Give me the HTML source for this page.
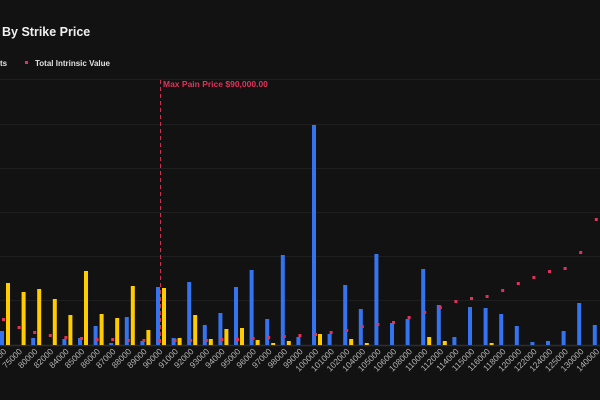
<!DOCTYPE html>
<html><head><meta charset="utf-8"><style>
html,body{margin:0;padding:0;background:#121212;width:600px;height:400px;overflow:hidden}
svg{display:block}
text{font-family:"Liberation Sans",sans-serif}
.b{fill:#3574f0}.y{fill:#ffcc00}.d{fill:#e0325a}
.l{fill:#b4b4b4;font-size:8.5px}
</style></head><body>
<svg width="600" height="400" viewBox="0 0 600 400">
<rect width="600" height="400" fill="#121212"/>
<text x="2" y="36" fill="#f0f0f0" font-size="12.5" font-weight="bold">By Strike Price</text>
<text x="0" y="66" fill="#e0e0e0" font-size="8" font-weight="bold">ts</text>
<rect x="25" y="61" width="3" height="3" class="d"/>
<text x="35" y="66" fill="#e0e0e0" font-size="8" font-weight="bold">Total Intrinsic Value</text>
<g stroke="#1f1f1f" stroke-width="1">
<line x1="0" y1="79.5" x2="600" y2="79.5"/><line x1="0" y1="124.5" x2="600" y2="124.5"/>
<line x1="0" y1="168.5" x2="600" y2="168.5"/><line x1="0" y1="212.5" x2="600" y2="212.5"/>
<line x1="0" y1="256.5" x2="600" y2="256.5"/><line x1="0" y1="300.5" x2="600" y2="300.5"/>
</g>
<line x1="0" y1="345.5" x2="600" y2="345.5" stroke="#2e2e2e" stroke-width="1.5"/>
<line x1="160.5" y1="80" x2="160.5" y2="345" stroke="#d0304f" stroke-width="1" stroke-dasharray="4,3"/>
<text x="163" y="87" fill="#e0325a" font-size="8.5" font-weight="bold">Max Pain Price $90,000.00</text>
<g>
<g transform="translate(5,0)"><rect x="-5" y="331" width="4" height="14" class="b"/><rect x="1" y="283" width="4" height="62" class="y"/><rect x="-3" y="318" width="3" height="3" class="d"/></g>
<g transform="translate(20.6,0)"><rect x="1" y="292" width="4" height="53" class="y"/><rect x="-3" y="326" width="3" height="3" class="d"/></g>
<g transform="translate(36.2,0)"><rect x="-5" y="338" width="4" height="7" class="b"/><rect x="1" y="289" width="4" height="56" class="y"/><rect x="-3" y="331" width="3" height="3" class="d"/></g>
<g transform="translate(51.8,0)"><rect x="1" y="299" width="4" height="46" class="y"/><rect x="-3" y="334" width="3" height="3" class="d"/></g>
<g transform="translate(67.4,0)"><rect x="-5" y="339" width="4" height="6" class="b"/><rect x="1" y="315" width="4" height="30" class="y"/><rect x="-3" y="336" width="3" height="3" class="d"/></g>
<g transform="translate(83,0)"><rect x="-5" y="338" width="4" height="7" class="b"/><rect x="1" y="271" width="4" height="74" class="y"/><rect x="-3" y="337" width="3" height="3" class="d"/></g>
<g transform="translate(98.6,0)"><rect x="-5" y="326" width="4" height="19" class="b"/><rect x="1" y="314" width="4" height="31" class="y"/><rect x="-3" y="338" width="3" height="3" class="d"/></g>
<g transform="translate(114.2,0)"><rect x="-5" y="343" width="4" height="2" class="b"/><rect x="1" y="318" width="4" height="27" class="y"/><rect x="-3" y="338" width="3" height="3" class="d"/></g>
<g transform="translate(129.8,0)"><rect x="-5" y="317" width="4" height="28" class="b"/><rect x="1" y="286" width="4" height="59" class="y"/><rect x="-3" y="339" width="3" height="3" class="d"/></g>
<g transform="translate(145.4,0)"><rect x="-5" y="341" width="4" height="4" class="b"/><rect x="1" y="330" width="4" height="15" class="y"/><rect x="-3" y="339" width="3" height="3" class="d"/></g>
<g transform="translate(161,0)"><rect x="-5" y="287" width="4" height="58" class="b"/><rect x="1" y="288" width="4" height="57" class="y"/><rect x="-3" y="339" width="3" height="3" class="d"/></g>
<g transform="translate(176.6,0)"><rect x="-5" y="338" width="4" height="7" class="b"/><rect x="1" y="338" width="4" height="7" class="y"/><rect x="-3" y="339" width="3" height="3" class="d"/></g>
<g transform="translate(192.2,0)"><rect x="-5" y="282" width="4" height="63" class="b"/><rect x="1" y="315" width="4" height="30" class="y"/><rect x="-3" y="339" width="3" height="3" class="d"/></g>
<g transform="translate(207.8,0)"><rect x="-5" y="325" width="4" height="20" class="b"/><rect x="1" y="339" width="4" height="6" class="y"/><rect x="-3" y="339" width="3" height="3" class="d"/></g>
<g transform="translate(223.4,0)"><rect x="-5" y="313" width="4" height="32" class="b"/><rect x="1" y="329" width="4" height="16" class="y"/><rect x="-3" y="338" width="3" height="3" class="d"/></g>
<g transform="translate(239,0)"><rect x="-5" y="287" width="4" height="58" class="b"/><rect x="1" y="328" width="4" height="17" class="y"/><rect x="-3" y="338" width="3" height="3" class="d"/></g>
<g transform="translate(254.6,0)"><rect x="-5" y="270" width="4" height="75" class="b"/><rect x="1" y="340" width="4" height="5" class="y"/><rect x="-3" y="337" width="3" height="3" class="d"/></g>
<g transform="translate(270.2,0)"><rect x="-5" y="319" width="4" height="26" class="b"/><rect x="1" y="343" width="4" height="2" class="y"/><rect x="-3" y="336" width="3" height="3" class="d"/></g>
<g transform="translate(285.8,0)"><rect x="-5" y="255" width="4" height="90" class="b"/><rect x="1" y="341" width="4" height="4" class="y"/><rect x="-3" y="335" width="3" height="3" class="d"/></g>
<g transform="translate(301.4,0)"><rect x="-5" y="337" width="4" height="8" class="b"/><rect x="-3" y="334" width="3" height="3" class="d"/></g>
<g transform="translate(317,0)"><rect x="-5" y="125" width="4" height="220" class="b"/><rect x="1" y="334" width="4" height="11" class="y"/><rect x="-3" y="333" width="3" height="3" class="d"/></g>
<g transform="translate(332.6,0)"><rect x="-5" y="334" width="4" height="11" class="b"/><rect x="-3" y="331" width="3" height="3" class="d"/></g>
<g transform="translate(348.2,0)"><rect x="-5" y="285" width="4" height="60" class="b"/><rect x="1" y="339" width="4" height="6" class="y"/><rect x="-3" y="329" width="3" height="3" class="d"/></g>
<g transform="translate(363.8,0)"><rect x="-5" y="309" width="4" height="36" class="b"/><rect x="1" y="343" width="4" height="2" class="y"/><rect x="-3" y="325" width="3" height="3" class="d"/></g>
<g transform="translate(379.4,0)"><rect x="-5" y="254" width="4" height="91" class="b"/><rect x="-3" y="323" width="3" height="3" class="d"/></g>
<g transform="translate(395,0)"><rect x="-5" y="323" width="4" height="22" class="b"/><rect x="-3" y="321" width="3" height="3" class="d"/></g>
<g transform="translate(410.6,0)"><rect x="-5" y="319" width="4" height="26" class="b"/><rect x="-3" y="316" width="3" height="3" class="d"/></g>
<g transform="translate(426.2,0)"><rect x="-5" y="269" width="4" height="76" class="b"/><rect x="1" y="337" width="4" height="8" class="y"/><rect x="-3" y="311" width="3" height="3" class="d"/></g>
<g transform="translate(441.8,0)"><rect x="-5" y="305" width="4" height="40" class="b"/><rect x="1" y="341" width="4" height="4" class="y"/><rect x="-3" y="306" width="3" height="3" class="d"/></g>
<g transform="translate(457.4,0)"><rect x="-5" y="337" width="4" height="8" class="b"/><rect x="-3" y="300" width="3" height="3" class="d"/></g>
<g transform="translate(473,0)"><rect x="-5" y="307" width="4" height="38" class="b"/><rect x="-3" y="297" width="3" height="3" class="d"/></g>
<g transform="translate(488.6,0)"><rect x="-5" y="308" width="4" height="37" class="b"/><rect x="1" y="343" width="4" height="2" class="y"/><rect x="-3" y="295" width="3" height="3" class="d"/></g>
<g transform="translate(504.2,0)"><rect x="-5" y="314" width="4" height="31" class="b"/><rect x="-3" y="289" width="3" height="3" class="d"/></g>
<g transform="translate(519.8,0)"><rect x="-5" y="326" width="4" height="19" class="b"/><rect x="-3" y="282" width="3" height="3" class="d"/></g>
<g transform="translate(535.4,0)"><rect x="-5" y="342" width="4" height="3" class="b"/><rect x="-3" y="276" width="3" height="3" class="d"/></g>
<g transform="translate(551,0)"><rect x="-5" y="341" width="4" height="4" class="b"/><rect x="-3" y="270" width="3" height="3" class="d"/></g>
<g transform="translate(566.6,0)"><rect x="-5" y="331" width="4" height="14" class="b"/><rect x="-3" y="267" width="3" height="3" class="d"/></g>
<g transform="translate(582.2,0)"><rect x="-5" y="303" width="4" height="42" class="b"/><rect x="-3" y="251" width="3" height="3" class="d"/></g>
<g transform="translate(597.8,0)"><rect x="-5" y="325" width="4" height="20" class="b"/><rect x="-3" y="218" width="3" height="3" class="d"/></g>
</g>
<g class="l" text-anchor="end">
<text transform="translate(7,352) rotate(-45)">74000</text>
<text transform="translate(22.6,352) rotate(-45)">75000</text>
<text transform="translate(38.2,352) rotate(-45)">80000</text>
<text transform="translate(53.8,352) rotate(-45)">82000</text>
<text transform="translate(69.4,352) rotate(-45)">84000</text>
<text transform="translate(85,352) rotate(-45)">85000</text>
<text transform="translate(100.6,352) rotate(-45)">86000</text>
<text transform="translate(116.2,352) rotate(-45)">87000</text>
<text transform="translate(131.8,352) rotate(-45)">88000</text>
<text transform="translate(147.4,352) rotate(-45)">89000</text>
<text transform="translate(163,352) rotate(-45)">90000</text>
<text transform="translate(178.6,352) rotate(-45)">91000</text>
<text transform="translate(194.2,352) rotate(-45)">92000</text>
<text transform="translate(209.8,352) rotate(-45)">93000</text>
<text transform="translate(225.4,352) rotate(-45)">94000</text>
<text transform="translate(241,352) rotate(-45)">95000</text>
<text transform="translate(256.6,352) rotate(-45)">96000</text>
<text transform="translate(272.2,352) rotate(-45)">97000</text>
<text transform="translate(287.8,352) rotate(-45)">98000</text>
<text transform="translate(303.4,352) rotate(-45)">99000</text>
<text transform="translate(319,352) rotate(-45)">100000</text>
<text transform="translate(334.6,352) rotate(-45)">101000</text>
<text transform="translate(350.2,352) rotate(-45)">102000</text>
<text transform="translate(365.8,352) rotate(-45)">104000</text>
<text transform="translate(381.4,352) rotate(-45)">105000</text>
<text transform="translate(397,352) rotate(-45)">106000</text>
<text transform="translate(412.6,352) rotate(-45)">108000</text>
<text transform="translate(428.2,352) rotate(-45)">110000</text>
<text transform="translate(443.8,352) rotate(-45)">112000</text>
<text transform="translate(459.4,352) rotate(-45)">114000</text>
<text transform="translate(475,352) rotate(-45)">115000</text>
<text transform="translate(490.6,352) rotate(-45)">116000</text>
<text transform="translate(506.2,352) rotate(-45)">118000</text>
<text transform="translate(521.8,352) rotate(-45)">120000</text>
<text transform="translate(537.4,352) rotate(-45)">122000</text>
<text transform="translate(553,352) rotate(-45)">124000</text>
<text transform="translate(568.6,352) rotate(-45)">125000</text>
<text transform="translate(584.2,352) rotate(-45)">130000</text>
<text transform="translate(599.8,352) rotate(-45)">140000</text>
</g>
</svg>
</body></html>
